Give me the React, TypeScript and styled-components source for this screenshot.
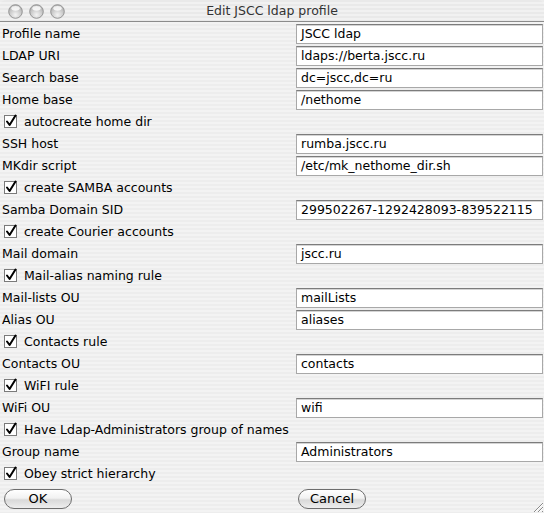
import styled, { createGlobalStyle } from "styled-components";

const GlobalStyle = createGlobalStyle`
  html, body {
    margin: 0;
    padding: 0;
    background: #ececec;
  }
  body {
    font-family: "DejaVu Sans", "Liberation Sans", sans-serif;
    font-size: 12.5px;
    color: #000;
  }
`;

type FieldRow = { label: string; value: string };
type CheckRow = { check: string };
type Item = FieldRow | CheckRow;

const items: Item[] = [
    {label: "Profile name", value: "JSCC ldap"},
    {label: "LDAP URI", value: "ldaps://berta.jscc.ru"},
    {label: "Search base", value: "dc=jscc,dc=ru"},
    {label: "Home base", value: "/nethome"},
    {check: "autocreate home dir"},
    {label: "SSH host", value: "rumba.jscc.ru"},
    {label: "MKdir script", value: "/etc/mk_nethome_dir.sh"},
    {check: "create SAMBA accounts"},
    {label: "Samba Domain SID", value: "299502267-1292428093-839522115"},
    {check: "create Courier accounts"},
    {label: "Mail domain", value: "jscc.ru"},
    {check: "Mail-alias naming rule"},
    {label: "Mail-lists OU", value: "mailLists"},
    {label: "Alias OU", value: "aliases"},
    {check: "Contacts rule"},
    {label: "Contacts OU", value: "contacts"},
    {check: "WiFI rule"},
    {label: "WiFi OU", value: "wifi"},
    {check: "Have Ldap-Administrators group of names"},
    {label: "Group name", value: "Administrators"},
    {check: "Obey strict hierarchy"},
];

function CheckMark() {
    return (
        <svg width="14" height="14" viewBox="0 0 14 14">
            <rect x="0.5" y="1.5" width="12" height="12" fill="#fff" stroke="#7a7a7a" />
            <path d="M3 7.5 L5.6 11 L11.5 1.5" fill="none" stroke="#000" strokeWidth="2" strokeLinecap="round" strokeLinejoin="round" />
        </svg>
    );
}

function Light() {
    return (
        <svg width="15" height="15" viewBox="0 0 15 15">
            <defs>
                <radialGradient id="lg" cx="50%" cy="75%" r="60%">
                    <stop offset="0" stopColor="#f4f4f4" />
                    <stop offset="1" stopColor="#b8b8b8" />
                </radialGradient>
            </defs>
            <circle cx="7.5" cy="7.5" r="6.8" fill="url(#lg)" stroke="#8d8d8d" strokeWidth="0.9" />
            <ellipse cx="7.5" cy="4.3" rx="4.2" ry="2.4" fill="#fff" opacity="0.8" />
        </svg>
    );
}

function Grip() {
    return (
        <svg width="14" height="14" viewBox="0 0 14 14">
            <path d="M4 13 L13 4 M8 13 L13 8 M12 13 L13 12" stroke="#8a8a8a" strokeWidth="1" />
            <path d="M5 13 L13 5 M9 13 L13 9" stroke="#fff" strokeWidth="1" />
        </svg>
    );
}

export default function App() {
    return (
        <Window>
            <GlobalStyle />
            <TitleBar>
                <Lights>
                    <Light />
                    <Light />
                    <Light />
                </Lights>
                <Title>Edit JSCC ldap profile</Title>
            </TitleBar>
            <Form>
                {items.map((it, i) =>
                    "check" in it ? (
                        <Row key={i}>
                            <CheckLabel>
                                <CheckMark />
                                <span>{it.check}</span>
                            </CheckLabel>
                        </Row>
                    ) : (
                        <Row key={i}>
                            <Label>{it.label}</Label>
                            <Field>{it.value}</Field>
                        </Row>
                    )
                )}
            </Form>
            <Buttons>
                <Button>OK</Button>
                <Button>Cancel</Button>
            </Buttons>
            <GripBox>
                <Grip />
            </GripBox>
        </Window>
    );
}

const Window = styled.div`
  position: relative;
  width: 544px;
  height: 513px;
  overflow: hidden;
  display: flex;
  flex-direction: column;
  background: repeating-linear-gradient(180deg, #ededed 0 2px, #f3f3f3 2px 4px);
`;

const TitleBar = styled.div`
  height: 22px;
  flex: 0 0 22px;
  box-sizing: border-box;
  position: relative;
  display: flex;
  align-items: center;
  justify-content: center;
  border-radius: 6px 6px 0 0;
  border-bottom: 1px solid #8c8c8c;
  background: repeating-linear-gradient(180deg, #e9e9e9 0 2px, #f1f1f1 2px 4px);
`;

const Lights = styled.div`
  position: absolute;
  left: 8px;
  top: 4px;
  display: flex;
  gap: 6px;
`;

const Title = styled.div`
  font-size: 12.5px;
  color: #333;
`;

const Form = styled.div`
  display: flex;
  flex-direction: column;
`;

const Row = styled.div`
  height: 22px;
  display: flex;
  align-items: center;
`;

const Label = styled.div`
  flex: 0 0 294px;
  padding-left: 2px;
  white-space: nowrap;
`;

const CheckLabel = styled.div`
  display: flex;
  align-items: center;
  gap: 6px;
  padding-left: 4px;
  white-space: nowrap;
`;

const Field = styled.div`
  box-sizing: border-box;
  width: 247px;
  height: 20px;
  margin-top: 1px;
  padding: 0 4px;
  display: flex;
  align-items: center;
  background: #fff;
  border: 1px solid #a8a8a8;
  border-top: 1px solid #7c7c7c;
  box-shadow: inset 0 1px 0 #d4d4d4;
  white-space: nowrap;
  overflow: hidden;
`;

const Buttons = styled.div`
  display: flex;
  align-items: center;
  height: 30px;
  padding-left: 4px;
  gap: 226px;
`;

const Button = styled.div`
  box-sizing: border-box;
  width: 68px;
  height: 20px;
  display: flex;
  align-items: center;
  justify-content: center;
  border: 1px solid #6d6d6d;
  border-radius: 10px;
  background: linear-gradient(180deg, #ffffff 0%, #f2f2f2 45%, #d9d9d9 55%, #eeeeee 100%);
  font-size: 13px;
`;

const GripBox = styled.div`
  position: absolute;
  right: 0;
  bottom: 0;
  width: 14px;
  height: 14px;
`;
